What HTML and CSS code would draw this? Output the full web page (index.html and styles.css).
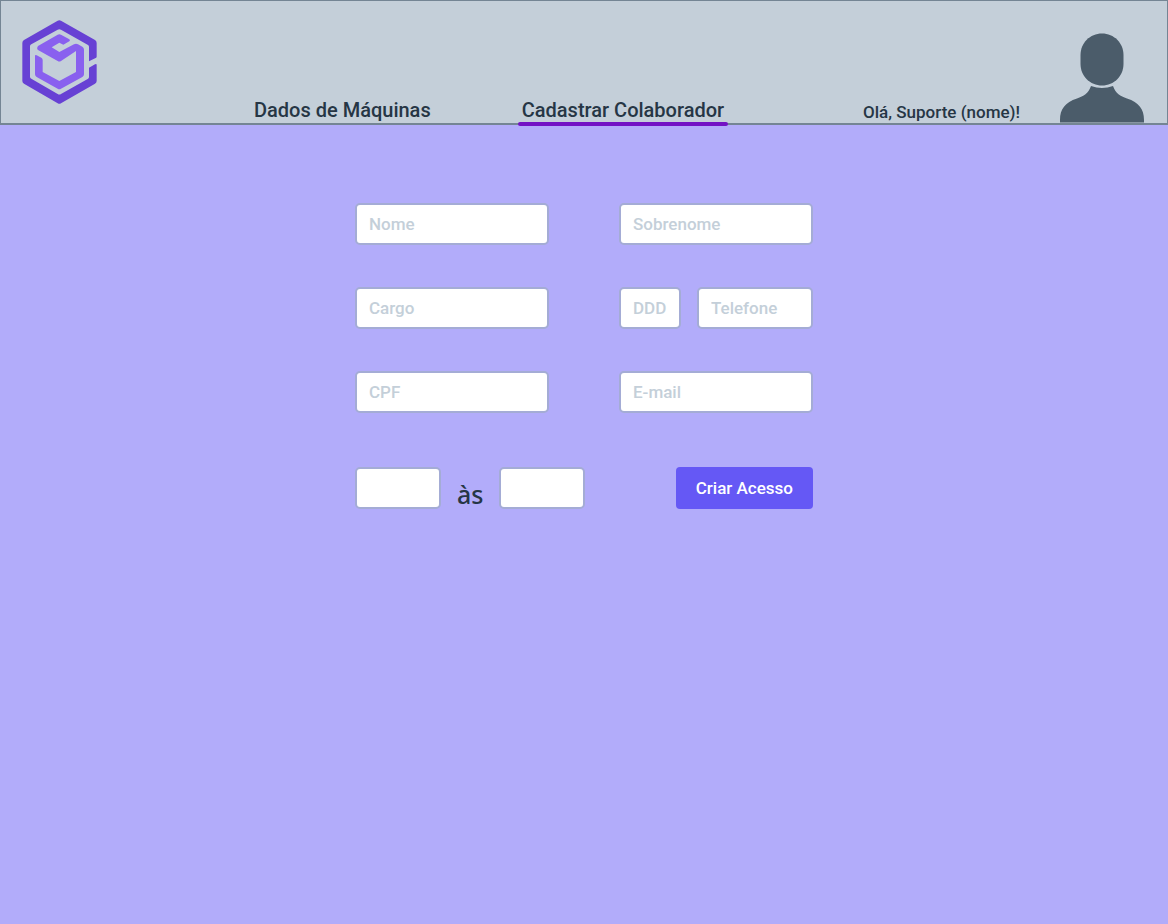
FILE: index.html
```html
<!DOCTYPE html>
<html lang="pt-BR">
<head>
<meta charset="utf-8">
<meta name="viewport" content="width=device-width, initial-scale=1">
<title>Cadastrar Colaborador</title>
<link rel="stylesheet" href="styles.css">
</head>
<body>
<header class="topbar">
  <a class="logo" href="#" aria-label="Início">
    <svg width="75" height="86" viewBox="36 27 225 258" aria-hidden="true">
      <path class="logo-outer" d="M143 32Q148 29 153 32L255 90Q260 93 260 99V140Q260 143 257 144L237 154V110Q237 107 234 105L153 59Q148 56 143 59L64 103Q60 105 60 109V200Q60 204 64 206L143 252Q148 255 153 252L233 207Q237 205 237 201V173L255 163Q260 160 260 165V213Q260 218 255 221L153 280Q148 283 143 280L42 221Q37 218 37 213V99Q37 93 42 90Z"/>
      <path class="logo-inner" d="M75 138Q75 133 80 136L94 143Q98 146 98 150V186L148 213L198 186V123L153 153Q148 156 143 153L84 120Q79 116 84 108L143 74Q148 71 153 74L178 88Q182 91 178 94L160 104L148 98L125 112L148 126L192 103Q198 99 204 103L217 110Q222 113 222 119V193Q222 198 217 201L153 236Q148 239 143 236L80 201Q75 198 75 193Z"/>
    </svg>
  </a>
  <nav class="nav">
    <a class="nav-link" href="#">Dados de Máquinas</a>
    <a class="nav-link nav-link-active" href="#" aria-current="page">Cadastrar Colaborador</a>
  </nav>
  <div class="user">
    <span class="greeting">Olá, Suporte (nome)!</span>
    <svg class="avatar" width="84" height="90" viewBox="0 0 84 90" aria-hidden="true">
      <path d="M42 .5C54 .5 63.500 10 63.500 22V31C63.500 43 54 52.500 42 52.500S20.500 43 20.500 31V22C20.500 10 30 .5 42 .5Z"/>
      <path d="M31 53Q42 57 53 53C56 61 60 63 67 65.500C79 69.500 84 76 84 87V89.500H0V87C0 76 5 69.500 17 65.500C24 63 28 61 31 53Z"/>
    </svg>
  </div>
</header>
<main class="content">
  <form class="form">
    <div class="fields">
      <input class="field" type="text" placeholder="Nome" aria-label="Nome">
      <input class="field" type="text" placeholder="Sobrenome" aria-label="Sobrenome">
      <input class="field" type="text" placeholder="Cargo" aria-label="Cargo">
      <div class="phone">
        <input class="field" type="text" placeholder="DDD" aria-label="DDD">
        <input class="field" type="tel" placeholder="Telefone" aria-label="Telefone">
      </div>
      <input class="field" type="text" placeholder="CPF" aria-label="CPF">
      <input class="field" type="email" placeholder="E-mail" aria-label="E-mail">
    </div>
    <div class="actions">
      <div class="hours">
        <input class="field field-hour" type="text" aria-label="Início do expediente">
        <span class="hours-text">às</span>
        <input class="field field-hour" type="text" aria-label="Fim do expediente">
      </div>
      <button class="submit" type="button">Criar Acesso</button>
    </div>
  </form>
</main>
</body>
</html>
```
FILE: styles.css
```css
* {
  box-sizing: border-box;
}

body {
  margin: 0;
  min-height: 100vh;
  background: #b2acfa;
  color: #263645;
  font-family: Roboto, "Liberation Sans", sans-serif;
  font-weight: 500;
}

.topbar {
  display: flex;
  align-items: flex-end;
  padding: 18px 23px 0 21px;
  background: #c4cfd9;
  border: 1px solid #748594;
  border-bottom-width: 2px;
}

.logo {
  display: block;
  align-self: flex-start;
  height: 86px;
  margin-bottom: 18px;
}

.logo svg,
.avatar {
  display: block;
}

.logo-outer {
  fill: #6741d4;
}

.logo-inner {
  fill: #8960ef;
}

.nav {
  display: flex;
  gap: 83px;
  margin-left: 153px;
}

.nav-link {
  position: relative;
  padding: 0 4px;
  color: inherit;
  font-size: 20px;
  line-height: 26px;
  text-decoration: none;
  white-space: nowrap;
}

.nav-link-active::after {
  content: "";
  position: absolute;
  left: 0;
  right: 0;
  bottom: -3px;
  height: 4px;
  border-radius: 2px;
  background: #7312c4;
}

.user {
  display: flex;
  align-items: flex-end;
  gap: 40px;
  margin-left: auto;
}

.greeting {
  font-size: 17px;
  line-height: 22px;
  white-space: nowrap;
}

.avatar {
  fill: #4b5c6a;
}

.content {
  padding: 78px 24px;
}

.form {
  display: grid;
  gap: 54px;
  max-width: 458px;
  margin: 0 auto;
}

.fields {
  display: grid;
  grid-template-columns: 1fr 1fr;
  gap: 42px 70px;
}

.field {
  width: 100%;
  min-width: 0;
  height: 42px;
  padding: 0 12px;
  border: 2px solid #a4acd5;
  border-radius: 5px;
  background: #fff;
  color: inherit;
  font: inherit;
  font-size: 17px;
}

.field::placeholder {
  color: #c4cfd9;
  opacity: 1;
}

.phone {
  display: grid;
  grid-template-columns: 62px 1fr;
  gap: 16px;
}

.phone .field {
  padding-right: 8px;
}

.actions,
.hours {
  display: flex;
  align-items: center;
}

.actions {
  justify-content: space-between;
}

.hours {
  gap: 16px;
}

.field-hour {
  width: 86px;
}

.hours-text {
  padding-top: 12px;
  font-family: "Noto Sans", sans-serif;
  font-size: 25px;
  line-height: 28px;
}

.submit {
  height: 42px;
  padding: 0 20px;
  border: 0;
  border-radius: 4px;
  background: #6558f5;
  color: #fff;
  font: inherit;
  font-size: 17px;
}
```
